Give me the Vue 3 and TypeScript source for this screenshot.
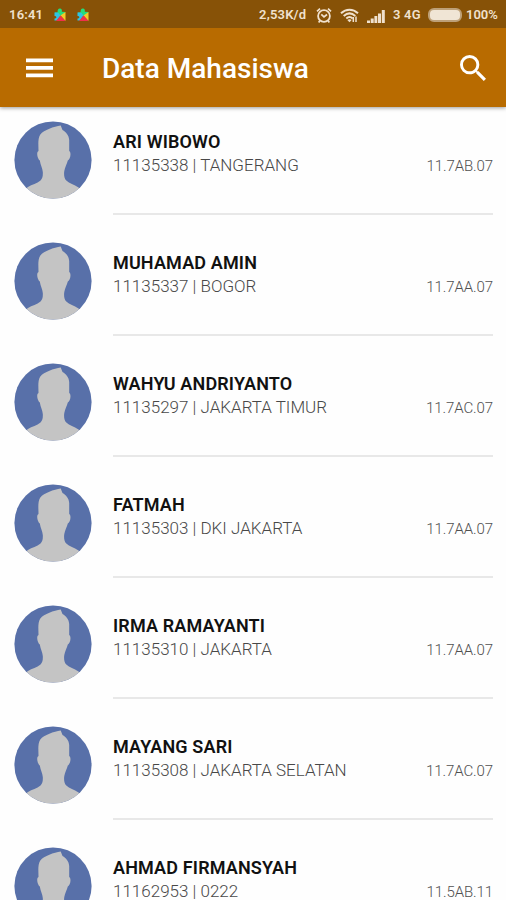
<script setup lang="ts">
interface Student {
  name: string
  id: string
  city: string
  group: string
}

const students: Student[] = [
  { name: 'ARI WIBOWO', id: '11135338', city: 'TANGERANG', group: '11.7AB.07' },
  { name: 'MUHAMAD AMIN', id: '11135337', city: 'BOGOR', group: '11.7AA.07' },
  { name: 'WAHYU ANDRIYANTO', id: '11135297', city: 'JAKARTA TIMUR', group: '11.7AC.07' },
  { name: 'FATMAH', id: '11135303', city: 'DKI JAKARTA', group: '11.7AA.07' },
  { name: 'IRMA RAMAYANTI', id: '11135310', city: 'JAKARTA', group: '11.7AA.07' },
  { name: 'MAYANG SARI', id: '11135308', city: 'JAKARTA SELATAN', group: '11.7AC.07' },
  { name: 'AHMAD FIRMANSYAH', id: '11162953', city: '0222', group: '11.5AB.11' },
]
</script>

<template>
  <div class="screen">
    <header class="top">
      <div class="status">
        <span class="clock">16:41</span>
        <svg v-for="n in 2" :key="n" class="puzzle" viewBox="0 0 12 14">
          <path d="M.5 4.500H3.600C3.300 1.500 4.500 .3 6.300 .6S8 3 7.800 3.800L11.500 4 8.500 8.500 5.500 7.500Z" fill="#25dc7c" />
          <path d="M.5 4.500H4L6.500 7.500 3 12.500H.5V10.500C3 10.500 3 8 .5 8Z" fill="#2fc3e3" />
          <path d="M11.500 4V13L6.500 7.500Z" fill="#f3c928" />
          <path d="M2 13 6.500 7.500 11.500 13Z" fill="#ef304b" />
        </svg>
        <span class="rate">2,53K/d</span>
        <svg class="alarm" viewBox="0 0 16 17" fill="none" stroke="currentColor">
          <circle cx="8" cy="9" r="5.900" stroke-width="1.800" />
          <path d="M5.300 7.300 8 9.900 11 7.500" stroke-width="1.700" />
          <path d="M1 4.300 4 1.600M15 4.300 12 1.600M4 13.500 2.700 15.500M12 13.500 13.300 15.500" stroke-width="1.700" />
        </svg>
        <svg class="wifi" viewBox="0 0 19 15" fill="none" stroke="currentColor">
          <path d="M1 5.200C6 .5 13 .5 18 5.200M3.700 8C7.500 4.500 11.500 4.500 15.300 8M6.300 10.500C8.500 8.500 10.500 8.500 12.700 10.500" stroke-width="2" />
          <path d="M7.300 12 9.500 14.300 11.700 12Q9.500 10.300 7.300 12Z" fill="currentColor" stroke="none" />
          <path d="M13.300 14V9M16 8.500V14" stroke-width="1.500" />
        </svg>
        <svg class="signal" viewBox="0 0 18 13" fill="currentColor">
          <path d="M0 10.500H3V13H0ZM3.700 8.500H6.700V13H3.700ZM7.400 6H10.300V13H7.400ZM11 3.500H14V13H11ZM14.800 0H17.800V13H14.800Z" />
        </svg>
        <span class="network">3 4G</span>
        <span class="battery"></span>
        <span class="percent">100%</span>
      </div>
      <div class="toolbar">
        <svg class="menu" viewBox="0 0 27 20" fill="#fff">
          <path d="M0 .5H27V4.300H0ZM0 8H27V11.800H0ZM0 15.500H27V19.300H0Z" />
        </svg>
        <h1 class="title">Data Mahasiswa</h1>
        <svg class="search" viewBox="3 3 17.490 17.490" fill="#fff">
          <path d="M15.500 14h-.79l-.28-.27A6.471 6.471 0 0 0 16 9.500 6.500 6.500 0 1 0 9.500 16c1.610 0 3.090-.59 4.230-1.570l.27.28v.79l5 4.990L20.490 19l-4.990-5zm-6 0C7.010 14 5 11.990 5 9.500S7.010 5 9.500 5 14 7.010 14 9.500 11.990 14 9.500 14z" />
        </svg>
      </div>
    </header>

    <main class="list">
      <article v-for="student in students" :key="student.id" class="row">
        <svg class="avatar" viewBox="0 0 78 78">
          <defs>
            <clipPath :id="`disc-${student.id}`"><circle cx="39" cy="39" r="38.600" /></clipPath>
          </defs>
          <g :clip-path="`url(#disc-${student.id})`">
            <path d="M0 0H78V78H0Z" fill="#5870a9" />
            <path d="M46.700 4.500C40 5.500 30 9 26.300 13.500C23.500 18 24.500 24 24.500 30C22 31 23.500 38 25.800 39.500C26.500 44 28.500 47 28.800 51C29 55 28.500 57.500 26.500 59.500C23 62.500 18 63.500 14 66L4 73V80H74V73L64.500 66.500C60 63.500 55.500 62.500 52.300 59.500C50 57.500 49.800 53 50.300 50C51 46 53 43 53.800 39.500C56.500 38 57.500 31 55.200 30V19C54.800 14 52 11 48.500 9Z" fill="#c4c4c4" />
          </g>
        </svg>
        <div class="body">
          <div class="info">
            <h2 class="name">{{ student.name }}</h2>
            <p class="detail">{{ student.id }} | {{ student.city }}</p>
          </div>
          <span class="group">{{ student.group }}</span>
        </div>
      </article>
    </main>
  </div>
</template>

<style>
body {
  margin: 0;
  overflow: hidden;
  background: #fefefe;
}
</style>

<style scoped>
.screen {
  width: 506px;
  height: 900px;
  overflow: hidden;
  background: #fefefe;
  font-family: Roboto, "Liberation Sans", sans-serif;
}
.top {
  position: relative;
  height: 107px;
  background: #b86b00;
  box-shadow: 0 1px 4px rgba(0, 0, 0, 0.4);
}
.status {
  display: flex;
  align-items: center;
  box-sizing: border-box;
  height: 28px;
  padding: 2px 8px 0 9px;
  background: #875207;
  color: #f0e1ce;
  font-size: 13px;
  font-weight: 600;
  line-height: 26px;
  letter-spacing: 0.2px;
  white-space: nowrap;
}
.status svg {
  flex: none;
}
.clock {
  width: 45px;
}
.puzzle {
  width: 12px;
  height: 14px;
  margin-right: 11px;
}
.rate {
  width: 50px;
  margin-left: auto;
}
.alarm {
  width: 16px;
  height: 17px;
  margin-left: 7px;
}
.wifi {
  width: 19px;
  height: 15px;
  margin-left: 8px;
}
.signal {
  width: 18px;
  height: 13px;
  margin-top: 2px;
  margin-left: 8px;
}
.network {
  width: 29px;
  margin-left: 8px;
}
.battery {
  box-sizing: border-box;
  width: 34px;
  height: 14px;
  margin-left: 6px;
  border: 2px solid #bda078;
  border-radius: 6px;
  background: #f0e5d5;
}
.percent {
  width: 32px;
  margin-left: 4px;
  letter-spacing: 0;
}
.toolbar {
  display: flex;
  align-items: center;
  box-sizing: border-box;
  height: 79px;
  padding: 0 20px 0 26px;
}
.menu {
  width: 27px;
  height: 20px;
}
.title {
  margin: 3px 0 0 49px;
  color: #fff;
  font-size: 28px;
  font-weight: 500;
  line-height: 36px;
  white-space: nowrap;
}
.search {
  width: 26px;
  height: 26px;
  margin-left: auto;
}
.row {
  display: flex;
  height: 121px;
  padding: 0 13px 0 14px;
}
.avatar {
  flex: none;
  width: 78px;
  height: 78px;
  margin-top: 14px;
}
.body {
  display: flex;
  flex: 1;
  justify-content: space-between;
  box-sizing: border-box;
  height: 108px;
  margin-left: 21px;
  padding-top: 23px;
  border-bottom: 2px solid #e8e8e8;
  white-space: nowrap;
}
.name {
  margin: 0;
  color: #111;
  font-size: 18px;
  font-weight: 600;
  line-height: 24px;
  letter-spacing: 0.15px;
}
.detail {
  margin: 0;
  color: #484848;
  font-size: 17px;
  font-weight: 300;
  line-height: 23px;
}
.group {
  margin-top: 24px;
  color: #505050;
  font-size: 15px;
  font-weight: 300;
  line-height: 24px;
  letter-spacing: -0.1px;
}
</style>
